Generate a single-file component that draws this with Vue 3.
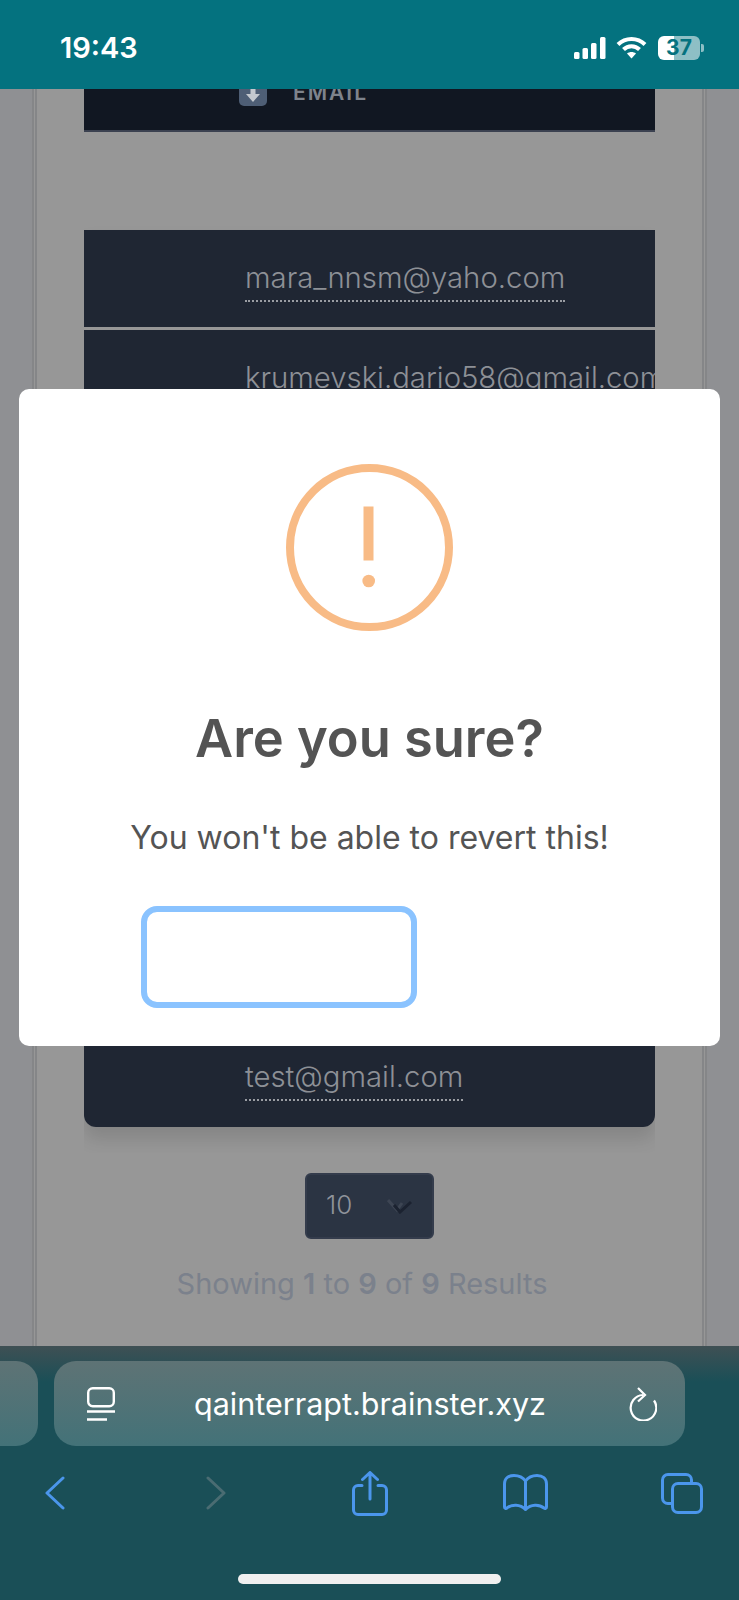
<template>
  <div class="phone">
    <header class="status">
      <span class="time">19:43</span>
      <div class="status-icons">
        <svg width="32" height="22" viewBox="0 0 32 22" fill="#fff">
          <rect x="0" y="15" width="5.5" height="7" rx="1.5" />
          <rect x="8.5" y="11" width="5.5" height="11" rx="1.5" />
          <rect x="17" y="6" width="5.5" height="16" rx="1.5" />
          <rect x="26" y="0" width="5.5" height="22" rx="1.5" />
        </svg>
        <svg width="31" height="23" viewBox="0 0 31 23" fill="none" stroke="#fff" stroke-width="4">
          <path d="M2 8.500C9.500 1 21.500 1 29 8.500" />
          <path d="M7.500 13.500C12 9 19 9 23.500 13.500" />
          <path d="M15.500 22.500L11 17.500C13.500 15.500 17.500 15.500 20 17.500Z" fill="#fff" stroke="none" />
        </svg>
        <div class="battery">37</div>
        <span class="battery-tip"></span>
      </div>
    </header>

    <main class="page">
      <div class="panel">
        <div class="table-wrap">
          <div class="table-head">
            <div class="head-cell">
              <span class="sort-icon">
                <svg width="16" height="18" viewBox="0 0 16 18" fill="#c5c9cf">
                  <path d="M5.500 1h5v8H15l-7 8-7-8h4.500z" />
                </svg>
              </span>
              <span class="head-label">EMAIL</span>
            </div>
          </div>
          <div class="rows">
            <div v-for="(email, i) in emails" :key="i" class="row">
              <span v-if="email" class="email">{{ email }}</span>
            </div>
          </div>
        </div>

        <div class="per-page">
          <span class="per-page-value">10</span>
          <svg width="26" height="16" viewBox="0 0 26 16" fill="none" stroke-width="3">
            <path d="M1 2l9 10 5-7" stroke="#3d4553" />
            <path d="M7 7l6 7 11-10" stroke="#1b2230" />
          </svg>
        </div>
        <p class="results">
          Showing <b>1</b> to <b>9</b> of <b>9</b> Results
        </p>
      </div>

      <div class="modal">
        <svg class="warn" width="167" height="167" viewBox="0 0 167 167" fill="#f8bb86">
          <circle cx="83.500" cy="83.500" r="79.500" fill="none" stroke="#f8bb86" stroke-width="8" />
          <rect x="77.500" y="42.500" width="10" height="54" />
          <circle cx="82.700" cy="117" r="6.300" />
        </svg>
        <h2 class="title">Are you sure?</h2>
        <p class="message">You won't be able to revert this!</p>
        <button class="confirm" type="button"></button>
      </div>
    </main>

    <footer class="toolbar">
      <div class="tabs-row">
        <div class="pill-prev"></div>
        <div class="pill">
          <svg width="28" height="34" viewBox="0 0 28 34" fill="none" stroke="#fff" stroke-width="2.400">
            <rect x="1.200" y="1.200" width="25.600" height="18" rx="4.500" />
            <path d="M0 24.500h28M0 32.500h20" stroke-width="2.600" />
          </svg>
          <span class="url">qainterrapt.brainster.xyz</span>
          <svg width="29" height="34" viewBox="0 0 29 34" fill="none" stroke="#fff" stroke-width="2.200">
            <path d="M15 8A12.800 12.800 0 1 0 26 13.500" />
            <path d="M10 1l7 7-7 6.500" />
          </svg>
        </div>
      </div>

      <nav class="nav">
        <svg class="ico-back" width="20" height="34" viewBox="0 0 20 34" fill="none" stroke="#4b96ec" stroke-width="3" stroke-linecap="round" stroke-linejoin="round">
          <path d="M18 2L2 17l16 15" />
        </svg>
        <svg class="ico-forward" width="20" height="34" viewBox="0 0 20 34" fill="none" stroke="#4a6c72" stroke-width="3" stroke-linecap="round" stroke-linejoin="round">
          <path d="M2 2l16 15L2 32" />
        </svg>
        <svg class="ico-share" width="36" height="45" viewBox="0 0 36 45" fill="none" stroke="#4b96ec" stroke-width="3" stroke-linecap="round" stroke-linejoin="round">
          <path d="M10 14.500H6a4.500 4.500 0 0 0-4.500 4.500v20A4.500 4.500 0 0 0 6 43.500h24a4.500 4.500 0 0 0 4.500-4.500V19a4.500 4.500 0 0 0-4.500-4.500h-4" />
          <path d="M18 28V2M10.500 8.500L18 1.500l7.500 7" />
        </svg>
        <svg class="ico-book" width="45" height="38" viewBox="0 0 45 38" fill="none" stroke="#4b96ec" stroke-width="3" stroke-linecap="round" stroke-linejoin="round">
          <path d="M22.500 7C20 3.500 16 1.500 11 1.500 5.500 1.500 1.500 4.500 1.500 10v23c0 1.500 1.500 2 2.500 1 5-4 13-4 18.500 1.500C28 30 36 30 41 34c1 1 2.500 .5 2.500-1V10c0-5.500-4-8.500-9.500-8.500-5 0-9 2-11.500 5.500zM22.500 7v28.500" />
        </svg>
        <svg class="ico-tabs" width="42" height="41" viewBox="0 0 42 41" fill="none" stroke="#4b96ec" stroke-width="3" stroke-linecap="round">
          <path d="M10 30.500H7A5.500 5.500 0 0 1 1.500 25V7A5.500 5.500 0 0 1 7 1.500h18A5.500 5.500 0 0 1 30.500 7v2" />
          <rect x="11.500" y="10.500" width="29" height="29" rx="5.500" />
        </svg>
      </nav>
      <div class="home-bar"></div>
    </footer>
  </div>
</template>

<script setup>
const emails = [
  "mara_nnsm@yaho.com",
  "krumevski.dario58@gmail.com",
  "",
  "",
  "",
  "",
  "",
  "",
  "test@gmail.com",
];
</script>

<style>
html,
body {
  margin: 0;
  background: #1a4f57;
}
</style>

<style scoped>
.phone {
  width: 739px;
  height: 1600px;
  display: flex;
  flex-direction: column;
  overflow: hidden;
  font-family: Inter, "Liberation Sans", sans-serif;
}
.status {
  height: 89px;
  flex: none;
  background: #04727f;
  display: flex;
  align-items: center;
  justify-content: space-between;
  padding: 6px 35px 0 60px;
  box-sizing: border-box;
  color: #fff;
}
.time {
  font-size: 29px;
  font-weight: 600;
}
.status-icons {
  display: flex;
  align-items: center;
  gap: 10px;
}
.battery {
  width: 42px;
  height: 24px;
  margin-left: 1px;
  border-radius: 6px;
  background: linear-gradient(to right, #fff 38%, rgba(255, 255, 255, 0.55) 38%);
  color: #04727f;
  font-size: 21px;
  font-weight: 700;
  line-height: 24px;
  text-align: center;
}
.battery-tip {
  width: 3px;
  height: 8px;
  margin-left: -9px;
  border-radius: 0 2px 2px 0;
  background: rgba(255, 255, 255, 0.55);
}
.page {
  position: relative;
  height: 1257px;
  flex: none;
  overflow: hidden;
  background: #8f9093;
}
.panel {
  height: 100%;
  margin: 0 32px;
  box-sizing: border-box;
  background: #979797;
  border: solid #858688;
  border-width: 0 5px;
  border-style: double;
  display: flex;
  flex-direction: column;
  align-items: center;
}
.table-wrap {
  width: 571px;
  padding-bottom: 26px;
  overflow: hidden;
}
.table-head {
  height: 43px;
  box-sizing: border-box;
  background: #111722;
  border-bottom: 2px solid #3b4150;
  overflow: hidden;
}
.head-cell {
  display: flex;
  align-items: center;
  gap: 26px;
  height: 28px;
  margin-top: -11px;
  padding-left: 155px;
}
.sort-icon {
  width: 28px;
  height: 28px;
  border-radius: 5px;
  background: #4e5e75;
  display: flex;
  align-items: flex-end;
  justify-content: center;
  padding-bottom: 3px;
  box-sizing: border-box;
}
.head-label {
  color: #7e838c;
  font-size: 21px;
  font-weight: 600;
  letter-spacing: 2px;
}
.rows {
  margin-top: 98px;
  display: flex;
  flex-direction: column;
  gap: 3px;
  border-radius: 0 0 12px 12px;
  box-shadow: 0 12px 18px rgba(0, 0, 0, 0.12);
}
.row {
  height: 97px;
  flex: none;
  background: #1f2633;
  padding-left: 161px;
  padding-top: 29px;
  box-sizing: border-box;
  overflow: hidden;
  white-space: nowrap;
}
.row:last-child {
  border-radius: 0 0 12px 12px;
  padding-top: 28px;
}
.email {
  display: inline-block;
  color: #8d9096;
  font-size: 29.300px;
  font-weight: 300;
  line-height: 38px;
  padding-bottom: 3px;
  border-bottom: 2px dotted #9a9da3;
}
.per-page {
  width: 129px;
  height: 66px;
  margin-top: 20px;
  padding: 0 19px 0 19px;
  box-sizing: border-box;
  flex: none;
  display: flex;
  align-items: center;
  justify-content: space-between;
  background: #2b3443;
  border: 2px solid #343c4c;
  border-radius: 6px;
  color: #8f939b;
  font-size: 26px;
  font-weight: 300;
}
.per-page-value {
  padding-bottom: 4px;
}
.results {
  margin: 26px 15px 0 0;
  color: #7b818c;
  font-size: 29px;
  font-weight: 400;
  line-height: 38px;
  white-space: nowrap;
}
.results b {
  font-weight: 600;
}
/* overlays everything underneath, like the sweetalert dialog it copies */
.modal {
  position: absolute;
  top: 300px;
  left: 19px;
  width: 701px;
  height: 657px;
  border-radius: 10px;
  background: #fff;
  display: flex;
  flex-direction: column;
  align-items: center;
}
.warn {
  margin-top: 75px;
  flex: none;
}
.title {
  margin: 74px 0 0;
  color: #545454;
  font-size: 52.400px;
  font-weight: 600;
  line-height: 66px;
}
.message {
  margin: 45px 0 0;
  color: #545454;
  font-size: 32px;
  font-weight: 400;
  line-height: 44px;
}
.confirm {
  align-self: flex-start;
  width: 276px;
  height: 102px;
  margin: 46px 0 0 122px;
  padding: 0;
  background: #fff;
  border: 6px solid #8ac3ff;
  border-radius: 16px;
}
.toolbar {
  flex: 1;
  background: linear-gradient(#3f5054 0, #1a4f57 36px);
  position: relative;
}
.tabs-row {
  display: flex;
  gap: 16px;
  padding-top: 15px;
  margin-left: -40px;
}
.pill-prev {
  width: 78px;
  height: 85px;
  border-radius: 0 22px 22px 0;
  background: linear-gradient(#5e7375, #437278);
  flex: none;
}
.pill {
  width: 631px;
  height: 85px;
  flex: none;
  padding: 0 28px 0 33px;
  box-sizing: border-box;
  border-radius: 22px;
  background: linear-gradient(#5e7375, #437278);
  display: flex;
  align-items: center;
  justify-content: space-between;
}
.url {
  color: #fff;
  font-size: 30.500px;
  margin-right: 3px;
}
.nav {
  display: flex;
  align-items: center;
  height: 44px;
  margin-top: 25px;
  padding-left: 45px;
}
.ico-forward {
  margin-left: 141px;
}
.ico-share {
  margin-left: 126px;
}
.ico-book {
  margin-left: 115px;
}
.ico-tabs {
  margin-left: 113px;
}
.home-bar {
  width: 263px;
  height: 10px;
  margin: 59px auto 0;
  border-radius: 5px;
  background: #f0f0f0;
}
</style>
